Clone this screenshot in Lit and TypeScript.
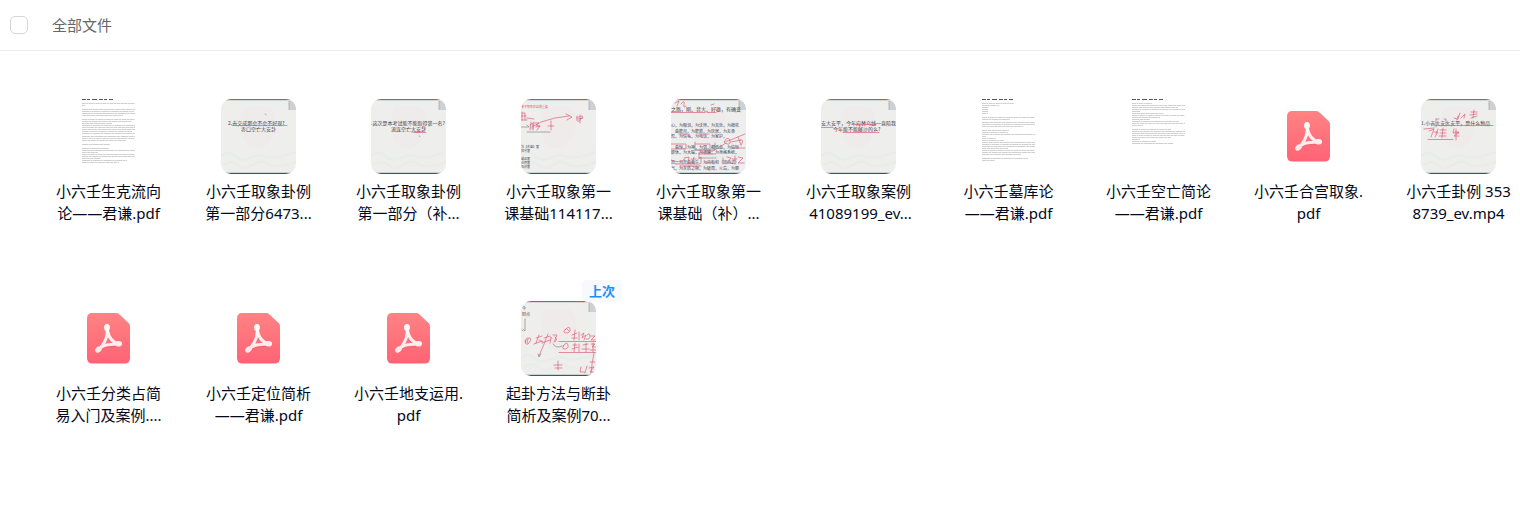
import { LitElement, html, svg, css, nothing, TemplateResult, SVGTemplateResult } from "lit";
import { customElement, property } from "lit/decorators.js";

interface Note {
  x: number;
  y: number;
  text: string;
  size?: number;
  red?: boolean;
}

interface Slide {
  notes: Note[];
  red?: string;
  dark?: string;
}

interface FileItem {
  lines: [string, string];
  kind: "pdf" | "page" | "slide";
  art?: string;
  last?: boolean;
}

const SLIDES: Record<string, Slide> = {
  caseOne: {
    notes: [
      { x: 7, y: 26, text: "2.去交成那会不会不好现?" },
      { x: 20, y: 32, text: "赤口空亡大安卦", size: 5 },
    ],
    red: "M11 26.500H66",
    dark: "M44 15l1 .5",
  },
  caseTwo: {
    notes: [
      { x: 0, y: 26, text: ".这次是本考试能不能取得第一名?" },
      { x: 20, y: 32, text: "流连空亡大安卦", size: 5 },
    ],
    red: "M43 33.500H55M51 28q4-2 3 2l-2 2M48 37l1 .5",
    dark: "M41 33H49",
  },
  basics: {
    notes: [
      { x: 0, y: 9, text: "单子取象在站微重要", size: 3, red: true },
      { x: 0, y: 49, text: "法【去留】富", size: 3 },
      { x: 0, y: 53, text: "加守富", size: 3 },
      { x: 0, y: 61, text: "或品富", size: 3 },
      { x: 0, y: 65, text: "注例富", size: 3 },
      { x: 0, y: 69, text: "知识富", size: 3 },
    ],
    red: "M1 13v8M1 14h3v7M0 17h5M0 21h6M6 19l7 1M10 23l-1 8M9 26l3-2-1 6M13 23l-1 8M14 24h4l-3 2 4 1M15 28l4-1-3 4M13 27l7-4 14-4 14-2M45 15l6 3-5 3M56 17q-1 7 2 5 5-5 3-5t-5 2M59 16v8M57 20l5-1M27 27h6M30 22v9",
    dark: "M0 28h8l-2-2M6 33H29",
  },
  basicsExtra: {
    notes: [
      { x: 0, y: 12, text: "之路，刚、音大、好雄，有确变" },
      { x: 0, y: 28, text: "心，为眼泪，为沃师，为其处，为棉花", size: 4 },
      { x: 4, y: 34, text: "曲能月，为能新，为庆居，为友单", size: 4 },
      { x: 0, y: 39, text: "形，为信毛，为电话，为家护，", size: 4 },
      { x: 4, y: 50, text: "曲惊，为神，为弱，都低血，为姑惊", size: 4 },
      { x: 0, y: 55, text: "即休，为大脑，为道路，为身格系统，", size: 4 },
      { x: 0, y: 65, text: "恐，为开曲面午，为内有和（加内式）", size: 4 },
      { x: 0, y: 71, text: "气，为灰质之物，为破周，火岛，为聊", size: 4 },
    ],
    red: "M0 13.500H34M36 13.500H45M4 4l4-2-2 5M10 5q4-5 3 0t2 2M40 6l3-1M8 35h9M28 35h10M0 45h15v5H0M24 45h15v6H24M28 55h17M54 41q4-4 5 1t-5 2q-3-2 3-2l17-7M60 43l10-2M67 38l3 8M70 46q4-6-1-5M28 54l14-2 13-8M13 59l5-1-1 6M20 60h5M23 58l-2 6M27 60l3-2v6M52 59v6M56 58l4 1-4 5h5M61 60h5M64 57v8M67 58l5 1-5 5h6M0 61q8 4 14-1M9 67H30M5 65H28M34 64h10M62 49h12",
    dark: "M24 43v8h20v-7M28 54v5h17",
  },
  caseThree: {
    notes: [
      { x: 0, y: 26, text: "安大安平，今年应替乌线一直陪我" },
      { x: 12, y: 32, text: "今年能不能够沙的么?" },
    ],
    red: "M34 25.500H55M22 33.500H58M39 27l-2 6",
    dark: "M0 28.500H12",
  },
  caseFour: {
    notes: [{ x: 0, y: 26, text: "1.小吉大安大安平，是什么物品" }],
    red: "M15 26.500H72M33 19l3 1M37 17l-1 4M39 14l-2 6M40 19l4-4-1 4M50 13h6M53 11l-1 8M49 16l7-1M50 19l6-2M3 30l10-1M8 32l5-2-3 8M13 33h4l-3 5M17 30l-2 5M19 31h6M22 29l-1 10M19 34h6M18 37h7M33 30l-1 4h6M34 33h4l-5 4h5M35 30v11",
    dark: "M15 20v8M15 20h3M23 20h2v7M7 40.500H32",
  },
  casting: {
    notes: [
      { x: 1, y: 9, text: "今", size: 4 },
      { x: 1, y: 15, text: "财点", size: 4 },
    ],
    red: "M1 29l1 1M4 41q0-4 4-4t-1 6q-4 1-2-4M7 38l-1 4M15 37l6-2M18 34l-3 8M13 43l8-3M18 39l4 2M23 37l6-2M27 33l-4 10-5 12M21 42l8-3M29 36l2 1M32 34l4 0-3 7M30 37l-1 5M34 36q3 2 0 5M44 29q4-5 5-1t-5 4q-3-2 1-4M46 28l2 2M51 34l5-2M54 29l-1 10M51 37h5M58 31v8M60 34l3-2-2 5 4-3-2 5M66 34q3-3 3 1t-4 3M70 35h4l-4 4h4M38 40.500H75M38 51.500H75M42 45q4-5 5-1t-4 4q-3-1 0-3M52 44h4M54 42l-1 9M51 48l6-2M58 43v8M62 44l5-1M65 42v9M61 48h7M70 43h4l-3 3h4M69 49h6M72 42v9M33 64h8M37 60v9M34 67h7M73 52l-2 11M69 61h5M60 66l-1 5h5M66 65l-2 7M68 67l5-1-4 5h4M71 64l-1 8",
    dark: "M4 18v12l-2-2M20 53l-2 3-1-3M32 43q3 5 9 2",
  },
};

// Each entry is [y, width] of one printed line inside the preview.
const PAGES: Record<string, number[][]> = {
  flow: [[4, 53], [6, 3], [10, 53], [12, 52], [14, 53], [16, 41], [20, 53], [22, 50], [24, 30], [26, 53], [28, 53], [30, 53], [32, 50], [34, 53], [37, 53], [39, 53], [41, 44], [45, 28], [49, 27], [51, 53], [53, 16], [55, 53], [57, 53], [59, 18], [61, 45], [63, 37]],
  store: [[4, 32], [6, 17], [8, 7], [10, 6], [12, 6], [14, 6], [18, 53], [20, 28], [23, 53], [25, 53], [27, 41], [31, 27], [33, 26], [35, 53], [37, 4], [39, 14], [41, 22], [43, 53], [45, 53], [47, 53], [49, 26], [51, 53], [53, 53], [55, 39], [59, 46], [61, 13]],
  empty: [[4, 20], [6, 53], [8, 46], [10, 53], [12, 8], [14, 32], [16, 53], [18, 28], [20, 18], [22, 47], [24, 53], [26, 11], [30, 39], [32, 53], [34, 53], [36, 53], [38, 39], [40, 8], [42, 24], [44, 41]],
};

const FILES: FileItem[] = [
  { lines: ["小六壬生克流向", "论——君谦.pdf"], kind: "page", art: "flow" },
  { lines: ["小六壬取象卦例", "第一部分6473..."], kind: "slide", art: "caseOne" },
  { lines: ["小六壬取象卦例", "第一部分（补..."], kind: "slide", art: "caseTwo" },
  { lines: ["小六壬取象第一", "课基础114117..."], kind: "slide", art: "basics" },
  { lines: ["小六壬取象第一", "课基础（补）..."], kind: "slide", art: "basicsExtra" },
  { lines: ["小六壬取象案例", " 41089199_ev..."], kind: "slide", art: "caseThree" },
  { lines: ["小六壬墓库论", "——君谦.pdf"], kind: "page", art: "store" },
  { lines: ["小六壬空亡简论", "——君谦.pdf"], kind: "page", art: "empty" },
  { lines: ["小六壬合宫取象.", "pdf"], kind: "pdf" },
  { lines: ["小六壬卦例 353", "8739_ev.mp4"], kind: "slide", art: "caseFour" },
  { lines: ["小六壬分类占简", "易入门及案例...."], kind: "pdf" },
  { lines: ["小六壬定位简析", "——君谦.pdf"], kind: "pdf" },
  { lines: ["小六壬地支运用.", "pdf"], kind: "pdf" },
  { lines: ["起卦方法与断卦", "简析及案例70..."], kind: "slide", art: "casting", last: true },
];

@customElement("file-thumb")
export class FileThumb extends LitElement {
  @property() kind = "pdf";
  @property() art = "";

  static styles = css`
    :host {
      display: block;
      width: 75px;
      height: 75px;
    }
    .art {
      display: block;
      width: 100%;
      height: 100%;
    }
    .slide {
      border-radius: 10px;
    }
    .note {
      font-family: "Noto Sans CJK SC", sans-serif;
      white-space: pre;
      fill: #444;
    }
    .note-red {
      fill: #e2566c;
    }
    .ink {
      fill: none;
      stroke-linecap: round;
      stroke-linejoin: round;
    }
    .ink-red {
      stroke: #e0607a;
      stroke-width: 0.7;
    }
    .ink-dark {
      stroke: #777;
      stroke-width: 0.6;
    }
    .print {
      fill: none;
      stroke: #cfcfcf;
      stroke-width: 1;
    }
    .print-title {
      stroke: #555;
    }
    .mark-limb {
      fill: none;
      stroke: url(#mark);
      stroke-width: 3;
      stroke-linecap: round;
      stroke-linejoin: round;
    }
    .mark-lobe {
      fill: url(#mark);
    }
  `;

  private pdf(): SVGTemplateResult {
    return svg`
      <defs>
        <linearGradient id="sheet" x1="0" y1="0" x2="0" y2="1">
          <stop offset="0" stop-color="#ff8383" />
          <stop offset="1" stop-color="#ff6375" />
        </linearGradient>
        <linearGradient id="mark" gradientUnits="userSpaceOnUse" x1="0" y1="23" x2="0" y2="52">
          <stop offset="0" stop-color="#fff" />
          <stop offset="1" stop-color="#ffe4e6" />
        </linearGradient>
      </defs>
      <path fill="url(#sheet)" d="M21 12H45q2 0 3.500 1.400L57.600 22Q59 23.400 59 25.500V57q0 5.500-5.500 5.500h-32Q16 62.500 16 57V17.500Q16 12 21 12z" />
      <path fill="none" stroke="#e64d63" stroke-opacity=".3" stroke-width="3" stroke-linecap="round" d="M28 50.500Q32 45 37 45T48 44.500" />
      <path class="mark-limb" d="M36 27Q37 35 33.500 41T27.500 49M36 27Q37 34 40 38T48 42.800M27.500 49Q31 44.500 37 43.800T48 42.800" />
      <ellipse class="mark-lobe" cx="36" cy="26.500" rx="2.900" ry="3.500" />
      <ellipse class="mark-lobe" cx="27.500" cy="48.500" rx="3.600" ry="2.800" transform="rotate(-42 27.500 48.500)" />
      <ellipse class="mark-lobe" cx="47.500" cy="42.700" rx="3.600" ry="2.800" />
    `;
  }

  private page(): SVGTemplateResult {
    return svg`
      <path class="print print-title" stroke-dasharray="4 1 3 2 5 2" d="M11 .5H42" />
      ${(PAGES[this.art] ?? []).map(
        ([y, w], i) => svg`<path class="print" stroke-dasharray=${`${4 + (i % 5)} .5 ${2 + (i % 3)} .4`} d=${`M11 ${y + 0.5}h${w}`} />`
      )}
    `;
  }

  private slide(): SVGTemplateResult {
    const s = SLIDES[this.art];
    return svg`
      <rect width="75" height="75" fill="#eeeeed" />
      <path fill="#f2e3e3" opacity=".3" d="M24 8h24q8 5 7 18-3 17-14 23-14 2-18-9-6-20 1-32z" />
      <path fill="none" stroke="#e4e9e8" stroke-width="2" opacity=".5" d="M0 57q8-6 14 0t15 2 14-2 13 1 19-5M3 66q8-6 14 0t15 0 13-2 14 3 16-4" />
      <rect x="68" y="1" width="7" height="10" fill="#cdd0d4" />
      <path stroke="#94979c" stroke-width=".6" d="M68 1v10" />
      <rect width="75" height="1" fill="#8a7058" />
      <rect y="1" width="75" height="1" fill="#d9d5d2" />
      <rect y="74" width="75" height="1" fill="#3f5a55" />
      <rect y="73" width="75" height="1" fill="#ccd2d1" />
      ${s.notes.map(
        (n) => svg`<text class=${n.red ? "note note-red" : "note"} x=${n.x} y=${n.y} font-size=${n.size ?? 5}>${n.text}</text>`
      )}
      ${s.dark ? svg`<path class="ink ink-dark" d=${s.dark} />` : nothing}
      ${s.red ? svg`<path class="ink ink-red" d=${s.red} />` : nothing}
    `;
  }

  render(): TemplateResult {
    const body = this.kind === "slide" ? this.slide() : this.kind === "page" ? this.page() : this.pdf();
    return html`<svg class="art ${this.kind}" viewBox="0 0 75 75" aria-hidden="true">${body}</svg>`;
  }
}

@customElement("app-root")
export class AppRoot extends LitElement {
  static styles = css`
    :host {
      display: block;
      background: #fff;
      color: #03081a;
      font-family: "Noto Sans", "Noto Sans CJK SC", sans-serif;
      font-size: 15px;
      line-height: 22px;
    }
    .bar {
      display: flex;
      align-items: center;
      gap: 24px;
      height: 50px;
      padding: 0 10px;
      border-bottom: 1px solid #f0f0f0;
    }
    .check {
      appearance: none;
      box-sizing: border-box;
      width: 18px;
      height: 18px;
      margin: 0;
      border: 1px solid #d6d6d9;
      border-radius: 5px;
      background: #fff;
    }
    .check:checked {
      border-color: #1890ff;
      background: #1890ff;
    }
    .title {
      color: #666;
    }
    .files {
      display: grid;
      grid-template-columns: repeat(auto-fill, 121px);
      gap: 77px 29px;
      margin: 0;
      padding: 48px 0 48px 48px;
      list-style: none;
    }
    .file {
      display: flex;
      flex-direction: column;
      align-items: center;
      gap: 6px;
      color: inherit;
      text-decoration: none;
    }
    .preview {
      position: relative;
    }
    .badge {
      position: absolute;
      top: -21px;
      right: -26px;
      padding: 0 7px;
      border-radius: 5px;
      background: #f7f9fc;
      color: #1a90ff;
      font-size: 13px;
      font-weight: 700;
      white-space: nowrap;
    }
    .name {
      text-align: center;
    }
    .line {
      display: block;
      white-space: pre;
    }
  `;

  render(): TemplateResult {
    return html`
      <header class="bar">
        <input class="check" type="checkbox" id="all" />
        <label class="title" for="all">全部文件</label>
      </header>
      <main>
        <ul class="files">
          ${FILES.map(
            (f) => html`<li>
              <a class="file" href="#">
                <span class="preview">
                  <file-thumb kind=${f.kind} art=${f.art ?? ""}></file-thumb>
                  ${f.last ? html`<span class="badge">上次</span>` : nothing}
                </span>
                <span class="name">${f.lines.map((l) => html`<span class="line">${l}</span>`)}</span>
              </a>
            </li>`
          )}
        </ul>
      </main>
    `;
  }
}
